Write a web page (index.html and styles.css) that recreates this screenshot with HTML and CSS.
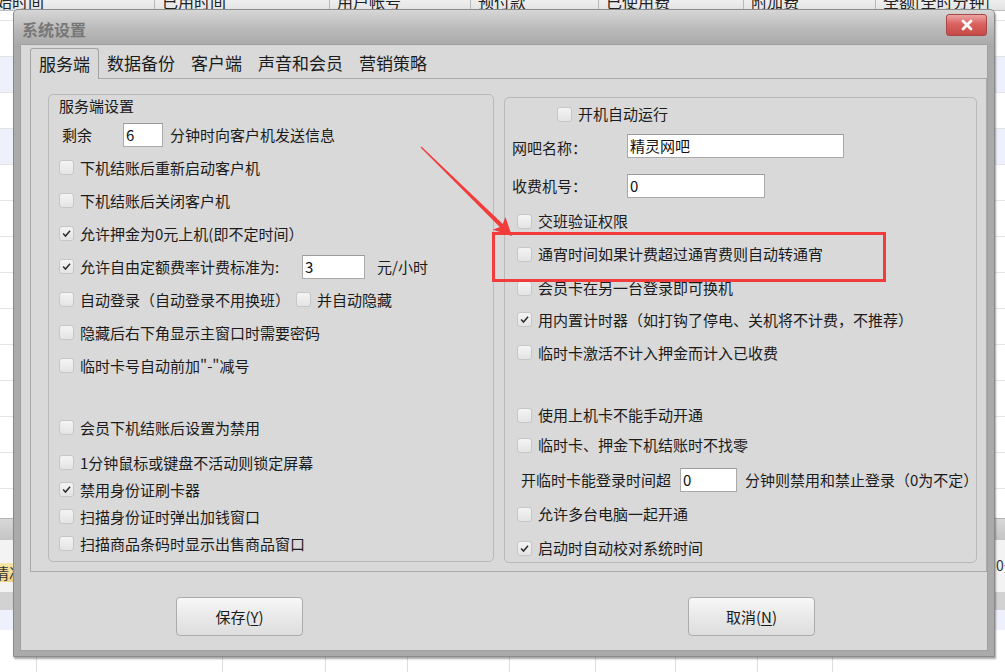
FILE: index.html
```html
<!DOCTYPE html>
<html lang="zh-CN">
<head>
<meta charset="utf-8">
<title>系统设置</title>
<link rel="stylesheet" href="styles.css">
</head>
<body>
<div class="app">
  <div class="grid-head">
    <div class="gh c1"><span>始时间</span></div>
    <div class="gh c2"><span>已用时间</span></div>
    <div class="gh c3"><span>用户帐号</span></div>
    <div class="gh c4"><span>预付款</span></div>
    <div class="gh c5"><span>已使用费</span></div>
    <div class="gh c6"><span>附加费</span></div>
    <div class="gh c7"><span>全额[全时分钟]</span></div>
  </div>
  <div class="grid-body">
    <div class="gr first"></div>
    <div class="gr"></div>
    <div class="gr alt"></div>
    <div class="gr"></div>
    <div class="gr alt"></div>
    <div class="gr"></div>
    <div class="gr"></div>
    <div class="gr"></div>
    <div class="gr"></div>
    <div class="gr"></div>
    <div class="gr"></div>
    <div class="gr"></div>
    <div class="gr"></div>
    <div class="gr"></div>
    <div class="gr last"></div>
  </div>
  <div class="status-bar"></div>
  <div class="tab-strip">
    <div class="ytab"><span>情况</span></div>
    <div class="rtext">0元</div>
  </div>
  <div class="sub-bar"></div>
  <div class="sub-row"></div>
  <div class="sub-grid">
    <div class="sc s1"></div><div class="sc s2"></div><div class="sc s3"></div><div class="sc s4"></div><div class="sc s5"></div><div class="sc s6"></div><div class="sc s7"></div><div class="sc s8"></div><div class="sc s9"></div>
  </div>
</div>

<div class="dialog">
  <div class="titlebar">
    <span class="title">系统设置</span>
    <span class="close"><svg width="14" height="12" viewBox="0 0 14 12"><path d="M3 2 L11 10 M11 2 L3 10" stroke="#fff" stroke-width="2.8" stroke-linecap="round"/></svg></span>
  </div>
  <div class="client">
    <div class="tabs">
      <div class="tab active">服务端</div>
      <div class="tab">数据备份</div>
      <div class="tab">客户端</div>
      <div class="tab">声音和会员</div>
      <div class="tab">营销策略</div>
    </div>
    <div class="panel">
      <div class="group gl">
        <div class="legend">服务端设置</div>
        <div class="row h33"><span class="remain">剩余</span><span class="tb w40">6</span><span class="tail">分钟时向客户机发送信息</span></div>
        <div class="row h33"><span class="cb"></span><span>下机结账后重新启动客户机</span></div>
        <div class="row h33"><span class="cb"></span><span>下机结账后关闭客户机</span></div>
        <div class="row h33"><span class="cb"><svg viewBox="0 0 15 15"><path d="M3.6 7.6 L6.3 10.5 L11.6 4.3"/></svg></span><span>允许押金为0元上机(即不定时间）</span></div>
        <div class="row h33"><span class="cb"><svg viewBox="0 0 15 15"><path d="M3.6 7.6 L6.3 10.5 L11.6 4.3"/></svg></span><span class="lbl-rate">允许自由定额费率计费标准为:</span><span class="tb w63">3</span><span class="unit">元/小时</span></div>
        <div class="row h33"><span class="cb"></span><span>自动登录（自动登录不用换班）</span><span class="cb"></span><span>并自动隐藏</span></div>
        <div class="row h33"><span class="cb"></span><span>隐藏后右下角显示主窗口时需要密码</span></div>
        <div class="row h33"><span class="cb"></span><span>临时卡号自动前加"-"减号</span></div>
        <div class="row h27 gap-big"><span class="cb"></span><span>会员下机结账后设置为禁用</span></div>
        <div class="row h27 gap-sm"><span class="cb"></span><span>1分钟鼠标或键盘不活动则锁定屏幕</span></div>
        <div class="row h27"><span class="cb"><svg viewBox="0 0 15 15"><path d="M3.6 7.6 L6.3 10.5 L11.6 4.3"/></svg></span><span>禁用身份证刷卡器</span></div>
        <div class="row h27"><span class="cb"></span><span>扫描身份证时弹出加钱窗口</span></div>
        <div class="row h27"><span class="cb"></span><span>扫描商品条码时显示出售商品窗口</span></div>
      </div>
      <div class="group gr2">
        <div class="row h32"><span class="cb ml40"></span><span>开机自动运行</span></div>
        <div class="row h36"><span class="flabel">网吧名称：</span><span class="tb w217 up2">精灵网吧</span></div>
        <div class="row h40"><span class="flabel">收费机号：</span><span class="tb w138">0</span></div>
        <div class="row h30"><span class="cb"></span><span>交班验证权限</span></div>
        <div class="row h36"><span class="cb"></span><span>通宵时间如果计费超过通宵费则自动转通宵</span></div>
        <div class="row h32"><span class="cb"></span><span>会员卡在另一台登录即可换机</span></div>
        <div class="row h31"><span class="cb"><svg viewBox="0 0 15 15"><path d="M3.6 7.6 L6.3 10.5 L11.6 4.3"/></svg></span><span>用内置计时器（如打钩了停电、关机将不计费，不推荐）</span></div>
        <div class="row h35"><span class="cb"></span><span>临时卡激活不计入押金而计入已收费</span></div>
        <div class="row h30 mt30"><span class="cb"></span><span>使用上机卡不能手动开通</span></div>
        <div class="row h30"><span class="cb"></span><span>临时卡、押金下机结账时不找零</span></div>
        <div class="row h40"><span class="plain">开临时卡能登录时间超</span><span class="tb w57">0</span><span class="tail2">分钟则禁用和禁止登录（0为不定）</span></div>
        <div class="row h28"><span class="cb"></span><span>允许多台电脑一起开通</span></div>
        <div class="row h40"><span class="cb"><svg viewBox="0 0 15 15"><path d="M3.6 7.6 L6.3 10.5 L11.6 4.3"/></svg></span><span>启动时自动校对系统时间</span></div>
      </div>
    </div>
    <div class="btnrow">
      <div class="btn">保存(<u>Y</u>)</div>
      <div class="btn">取消(<u>N</u>)</div>
    </div>
  </div>
</div>

<svg class="annot" width="1005" height="672" viewBox="0 0 1005 672">
  <rect x="493.5" y="233.5" width="391" height="47" fill="none" stroke="#f23b3b" stroke-width="3"/>
  <polygon points="420.6,147.4 499.8,227.1 492.8,229.8 512,236 505.4,217 502.8,223.9 421.4,146.6" fill="#f23b3b"/>
</svg>
</body>
</html>
```

FILE: styles.css
```css
* { box-sizing: border-box; }
html, body { margin: 0; padding: 0; }
body {
  width: 1005px;
  height: 672px;
  overflow: hidden;
  position: relative;
  background: #fff;
  font-family: "Noto Sans CJK SC", "Noto Sans", sans-serif;
  color: #1b1b1b;
}

/* ---------- background application ---------- */
.app { display: flex; flex-direction: column; height: 672px; }
.grid-head {
  display: flex;
  height: 11px;
  flex: none;
  overflow: hidden;
  background: linear-gradient(#efefef, #e3e3e3);
  border-bottom: 1px solid #bdbdbd;
  font-size: 16px;
  line-height: 18px;
  color: #222;
}
.gh { border-right: 1px solid #b9b9b9; padding-left: 7px; white-space: nowrap; overflow: hidden; flex: none; }
.gh span { display: block; margin-top: -8px; }
.c1 { width: 155px; padding-left: 0; }
.c1 span { margin-left: -4px; }
.c2 { width: 175px; }
.c3 { width: 141px; }
.c4 { width: 128px; }
.c5 { width: 145px; }
.c6 { width: 132px; }
.c7 { flex: 1; border-right: none; }

.grid-body { height: 507px; flex: none; display: flex; flex-direction: column; }
.gr { height: 36px; flex: none; border-bottom: 1px solid #e4e4e4; }
.gr.first { height: 10px; }
.gr.alt { background: #eef0fc; }
.gr.last { flex: 1; border-bottom: none; }

.status-bar { height: 22px; flex: none; background: linear-gradient(#d8d8d8, #c4c4c4); border-top: 1px solid #b4b4b4; }
.tab-strip { height: 52px; flex: none; background: #f3f3f3; display: flex; align-items: flex-start; padding-top: 23px; }
.ytab {
  width: 60px; height: 19px;
  background: linear-gradient(#f7e6a8, #eed48a);
  font-size: 15px; line-height: 19px; color: #333;
  overflow: hidden; white-space: nowrap;
}
.ytab span { display: block; margin-left: -6px; }
.rtext { margin-left: auto; width: 9px; overflow: hidden; white-space: nowrap; font-size: 14px; line-height: 16px; margin-top: -6px; color: #333; }
.sub-bar { height: 18px; flex: none; background: #d2d2d2; }
.sub-row { height: 20px; flex: none; background: #eef0fc; }
.sub-grid { flex: 1; display: flex; }
.sc { border-right: 1px solid #dedede; flex: none; }
.s1 { width: 37px; } .s2 { width: 186px; } .s3 { width: 103px; } .s4 { width: 82px; } .s5 { width: 102px; }
.s6 { width: 86px; } .s7 { width: 80px; } .s8 { width: 82px; } .s9 { width: 75px; }

/* ---------- dialog window ---------- */
.dialog {
  position: absolute;
  left: 13px; top: 9px;
  width: 982px; height: 648px;
  background: #aaaaaa;
  border: 1px solid #8a8a8a;
  border-radius: 5px 5px 0 0;
  box-shadow: 1px 2px 2px rgba(0,0,0,0.35);
  padding: 0 6px 5px 6px;
  display: flex;
  flex-direction: column;
}
.titlebar {
  height: 34px;
  flex: none;
  margin: 0 -6px;
  padding: 0 7px 0 8px;
  background: linear-gradient(#d6d6d6, #b8b8b8 60%, #ababab);
  border-radius: 4px 4px 0 0;
  display: flex;
  align-items: flex-start;
  justify-content: space-between;
}
.title { font-size: 16px; font-weight: bold; color: #777; line-height: 20px; margin-top: 9px; }
.close {
  margin-top: 4px;
  width: 41px; height: 22px;
  border: 1px solid #a94646;
  border-radius: 3px;
  background: linear-gradient(#eba6a4, #d9625f 45%, #c64a47);
  display: flex; align-items: center; justify-content: center;
}

.client {
  flex: 1;
  background: #d9d9d9;
  border: 1px solid #a0a0a0;
  padding: 2px 0 0 9px;
  display: flex;
  flex-direction: column;
}
.tabs { display: flex; align-items: flex-end; height: 31px; flex: none; }
.tab { padding: 0 8px; height: 30px; line-height: 29px; font-size: 17px; color: #1b1b1b; white-space: nowrap; }
.tab.active {
  height: 31px;
  border: 1px solid #a3a3a3;
  border-bottom: none;
  border-radius: 3px 3px 0 0;
  background: #d9d9d9;
  margin-bottom: -1px;
  position: relative;
  z-index: 1;
}

.panel {
  height: 494px;
  flex: none;
  border: 1px solid #a9a9a9;
  background: #d9d9d9;
  display: flex;
  align-items: flex-start;
  gap: 10px;
  padding: 15px 0 0 17px;
}
.group {
  border: 1px solid #b9b9b9;
  border-radius: 5px;
  display: flex;
  flex-direction: column;
  font-size: 15px;
}
.gl { width: 446px; height: 468px; padding-left: 10px; }
.gr2 { width: 473px; height: 466px; margin-top: 3px; padding-left: 12px; }
.legend { height: 23px; line-height: 22px; flex: none; }

.row { display: flex; align-items: center; gap: 6px; flex: none; white-space: nowrap; line-height: 20px; }
.h27 { height: 27px; } .h28 { height: 28px; } .h30 { height: 30px; } .h31 { height: 31px; }
.h32 { height: 32px; } .h33 { height: 33px; } .h35 { height: 35px; } .h36 { height: 36px; } .h40 { height: 40px; }
.gap-big { margin-top: 32px; }
.gap-sm { margin-top: 8px; }
.mt30 { margin-top: 30px; }

.cb {
  width: 15px; height: 15px; flex: none;
  border: 1px solid #c6c6c6;
  border-radius: 3px;
  background: linear-gradient(#f4f4f4, #e4e4e4);
  display: flex;
}
.cb svg { width: 13px; height: 13px; }
.cb svg path { fill: none; stroke: #2b2b2b; stroke-width: 1.7; }
.ml40 { margin-left: 40px; }

.tb {
  height: 24px; flex: none;
  background: #fff;
  border: 1px solid #a9a9a9;
  border-top-color: #9b9b9b;
  padding-left: 2px;
  line-height: 22px;
  font-size: 15px;
  color: #111;
}
.w40 { width: 40px; } .w57 { width: 57px; } .w63 { width: 63px; } .w138 { width: 138px; } .w217 { width: 217px; }
.up2 { margin-bottom: 4px; }

.remain { margin-left: 3px; margin-right: 25px; }
.tail { margin-left: 1px; }
.lbl-rate { width: 216px; }
.unit { margin-left: 6px; }
.flabel { width: 109px; margin-left: -5px; }
.plain { margin-left: 4px; margin-right: 3px; }
.tail2 { margin-left: 2px; }

.btnrow { display: flex; gap: 385px; margin: 25px 0 0 146px; flex: none; }
.btn {
  width: 127px; height: 39px;
  border: 1px solid #ababab;
  border-radius: 4px;
  background: linear-gradient(#f7f7f7, #e9e9e9 50%, #dedede);
  font-size: 15px;
  display: flex; align-items: center; justify-content: center;
  color: #1b1b1b;
}
.btn u { text-underline-offset: 2px; }

/* ---------- annotation overlay ---------- */
.annot { position: absolute; left: 0; top: 0; pointer-events: none; }
```
